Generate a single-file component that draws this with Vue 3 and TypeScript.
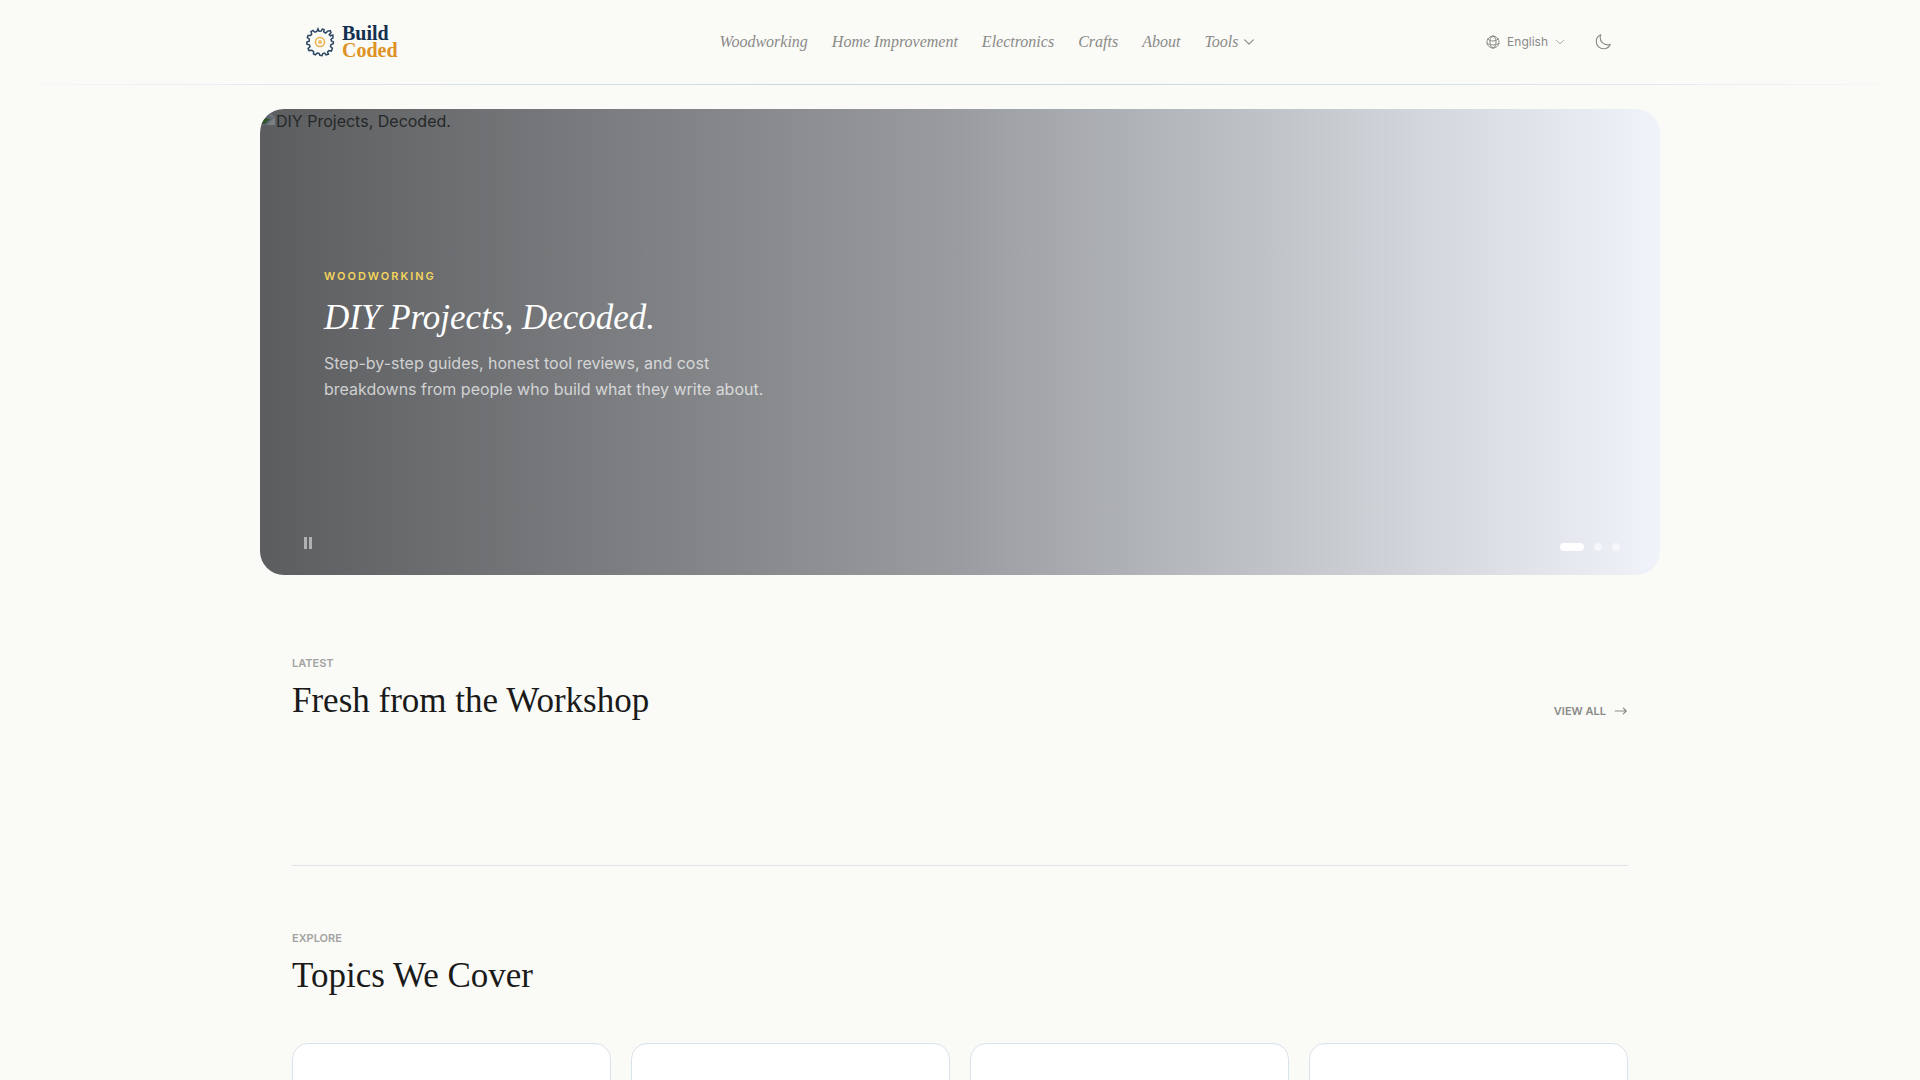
<script setup lang="ts">
interface NavItem {
  label: string
  href: string
}

const navItems: NavItem[] = [
  { label: 'Woodworking', href: '#woodworking' },
  { label: 'Home Improvement', href: '#home-improvement' },
  { label: 'Electronics', href: '#electronics' },
  { label: 'Crafts', href: '#crafts' },
  { label: 'About', href: '#about' },
]

const slides: number[] = [1, 2, 3]
const topicCards: number[] = [1, 2, 3, 4]
</script>

<template>
  <div class="page">
    <header class="site-header">
      <div class="header-inner">
        <a class="logo" href="#home" aria-label="Build Coded">
          <svg class="logo-gear" viewBox="-1 -1 32 32" fill="none" aria-hidden="true">
            <path
              d="M13 1.9 14 4.2 16.2 4.1 17.3 2.1 19 2.6 18.7 4.900 20.700 6 22.700 4.300 25.400 3.600 26 5.500 24.200 7.700 25.400 8.800 27.800 8 28 10.800 26 12.200 26.400 13.900 28.400 14.900 28.200 16.800 26 17.600 25.500 19.600 27.400 21.200 26.400 24.100 23.900 23.500 22.600 25 23.400 27.200 21 27.800 19.600 26 17.800 26.500 17 28.600 14.900 28.400 14.100 26.400 12.200 26 10.400 27.800 8.500 27 8.600 24.600 6.900 23.200 4 23.600 3.100 21.400 5 19.700 4.400 17.900 1.900 17.200 1.800 15 4.200 14.100 4.300 12.200 2.300 10.600 3 8.400 5.600 8.500 6.700 7 6 4.600 8 3.400 9.900 5.200 11.800 4.400Z"
              stroke="#2c4763"
              stroke-width="1.5"
              stroke-linejoin="miter"
            />
            <circle cx="15" cy="15" r="4.5" stroke="#efb04a" stroke-width="1.5" />
            <circle cx="15" cy="15" r="2" fill="#f3be68" />
          </svg>
          <span class="logo-text">
            <span>Build</span>
            <span class="logo-accent">Coded</span>
          </span>
        </a>

        <nav class="main-nav" aria-label="Main">
          <a v-for="item in navItems" :key="item.label" :href="item.href">{{ item.label }}</a>
          <button type="button" class="tools">
            Tools
            <svg width="14" height="14" viewBox="0 0 24 24" fill="none" stroke="currentColor" stroke-width="2" stroke-linecap="round" stroke-linejoin="round" aria-hidden="true">
              <path d="m19.5 8.250-7.500 7.500-7.500-7.500" />
            </svg>
          </button>
        </nav>

        <div class="actions">
          <button type="button" class="language">
            <svg width="16" height="16" viewBox="0 0 24 24" fill="none" stroke="currentColor" stroke-width="1.5" stroke-linecap="round" stroke-linejoin="round" aria-hidden="true">
              <path d="M12 21a9.004 9.004 0 0 0 8.716-6.747M12 21a9.004 9.004 0 0 1-8.716-6.747M12 21c2.485 0 4.500-4.030 4.500-9S14.485 3 12 3m0 18c-2.485 0-4.500-4.030-4.500-9S9.515 3 12 3m0 0a8.997 8.997 0 0 1 7.843 4.582M12 3a8.997 8.997 0 0 0-7.843 4.582m15.686 0A11.953 11.953 0 0 1 12 10.500c-2.998 0-5.740-1.100-7.843-2.918m15.686 0A8.959 8.959 0 0 1 21 12c0 .778-.099 1.533-.284 2.253m0 0A17.919 17.919 0 0 1 12 16.500c-3.162 0-6.133-.815-8.716-2.247m0 0A9.015 9.015 0 0 1 3 12c0-1.605.420-3.113 1.157-4.418" />
            </svg>
            <span>English</span>
            <svg width="12" height="12" viewBox="0 0 24 24" fill="none" stroke="currentColor" stroke-width="1.5" stroke-linecap="round" stroke-linejoin="round" aria-hidden="true">
              <path d="m19.5 8.250-7.500 7.500-7.500-7.500" />
            </svg>
          </button>
          <button type="button" class="theme" aria-label="Toggle dark mode">
            <svg width="18" height="18" viewBox="0 0 24 24" fill="none" stroke="currentColor" stroke-width="1.5" stroke-linecap="round" stroke-linejoin="round" aria-hidden="true">
              <path d="M21.752 15.002A9.720 9.720 0 0 1 18 15.750c-5.385 0-9.750-4.365-9.750-9.750 0-1.330.266-2.597.748-3.752A9.753 9.753 0 0 0 3 11.250C3 16.635 7.365 21 12.750 21a9.753 9.753 0 0 0 9.002-5.998Z" />
            </svg>
          </button>
        </div>
      </div>
    </header>

    <main>
      <section class="hero" aria-label="Featured">
        <div class="missing-image">
          <svg width="16" height="16" viewBox="0 0 16 16" aria-hidden="true">
            <path d="M1 4h9l5 4v8H1Z" fill="#5f6873" />
            <path d="M1 15v-2l4-4 5 1-5 5Z" fill="#34552a" />
            <path d="M15 8 7 16h8Z" fill="#7b8080" />
            <path d="M10 4v4h5Z" fill="#72777a" />
          </svg>
          <span>DIY Projects, Decoded.</span>
        </div>
        <div class="hero-copy">
          <p class="hero-topic">Woodworking</p>
          <h1>DIY Projects, Decoded.</h1>
          <p class="hero-text">
            Step-by-step guides, honest tool reviews, and cost breakdowns from people who build what they write about.
          </p>
        </div>
        <button type="button" class="pause" aria-label="Pause slideshow">
          <svg width="16" height="16" viewBox="0 0 16 16" fill="currentColor" aria-hidden="true">
            <rect x="4" y="2" width="3" height="12" />
            <rect x="9" y="2" width="3" height="12" />
          </svg>
        </button>
        <div class="dots">
          <button
            v-for="slide in slides"
            :key="slide"
            type="button"
            :class="['dot', { active: slide === 1 }]"
            :aria-label="`Go to slide ${slide}`"
          ></button>
        </div>
      </section>

      <section class="section latest">
        <div class="section-head">
          <div>
            <p class="eyebrow">Latest</p>
            <h2>Fresh from the Workshop</h2>
          </div>
          <a class="view-all" href="#articles">
            View all
            <svg width="14" height="14" viewBox="0 0 24 24" fill="none" stroke="currentColor" stroke-width="2" stroke-linecap="round" stroke-linejoin="round" aria-hidden="true">
              <path d="M2 12h19M16 7l5 5-5 5" />
            </svg>
          </a>
        </div>
      </section>

      <section class="section topics">
        <p class="eyebrow">Explore</p>
        <h2>Topics We Cover</h2>
        <div class="cards">
          <article v-for="card in topicCards" :key="card" class="card"></article>
        </div>
      </section>
    </main>
  </div>
</template>

<style>
html {
  background: #fafaf7;
}
body {
  margin: 0;
}
</style>

<style scoped>
.page {
  height: 100vh;
  overflow: hidden;
  background: #fafaf7;
  color: #1a1a1a;
  font-family: Inter, "Noto Sans", sans-serif;
  font-size: 16px;
  line-height: 24px;
}
h1,
h2,
p {
  margin: 0;
}
a {
  color: inherit;
  text-decoration: none;
}
button {
  padding: 0;
  border: 0;
  background: none;
  color: inherit;
  font: inherit;
  cursor: pointer;
}
svg {
  display: block;
  flex: none;
}
.site-header::after {
  content: "";
  display: block;
  height: 1px;
  background: linear-gradient(90deg, transparent, #dbe2ec 20%, #c5d5dd 50%, #dbe2ec 80%, transparent);
}
.header-inner {
  display: grid;
  grid-template-columns: 1fr auto 1fr;
  align-items: center;
  box-sizing: border-box;
  max-width: 1400px;
  height: 84px;
  margin: 0 auto;
  padding: 0 44px;
}
.logo {
  display: flex;
  align-items: center;
  gap: 6px;
  justify-self: start;
}
.logo-gear {
  width: 32px;
  height: 32px;
}
.logo-text {
  display: flex;
  flex-direction: column;
  color: #14304f;
  font: bold 20px/17px "Liberation Serif", serif;
}
.logo-accent {
  color: #df9224;
}
.main-nav {
  display: flex;
  align-items: center;
  gap: 24px;
  padding-left: 56px;
  color: #8a8a87;
  font: italic 16px/24px "Liberation Serif", serif;
}
.tools {
  display: flex;
  align-items: center;
  gap: 4px;
}
.actions {
  display: flex;
  align-items: center;
  justify-self: end;
  gap: 28px;
  padding-right: 4px;
  color: #8a8a87;
}
.language {
  display: flex;
  align-items: center;
  gap: 6px;
  font-size: 12px;
  line-height: 16px;
}
.hero {
  position: relative;
  display: flex;
  align-items: center;
  box-sizing: border-box;
  max-width: 1400px;
  aspect-ratio: 700 / 233;
  margin: 24px auto 0;
  padding: 0 64px;
  overflow: hidden;
  border-radius: 24px;
  background:
    linear-gradient(90deg, rgba(0, 0, 0, 0.62), rgba(0, 0, 0, 0.36) 50%, rgba(0, 0, 0, 0)),
    #f0f4fa;
}
.missing-image {
  position: absolute;
  top: 0;
  left: 0;
  display: flex;
  color: #262827;
}
.hero-copy {
  max-width: 448px;
  padding-bottom: 14px;
}
.hero-topic {
  margin-bottom: 12px;
  color: #f5d55c;
  font-size: 11px;
  font-weight: 600;
  line-height: 16px;
  letter-spacing: 2px;
  text-transform: uppercase;
}
h1 {
  margin-bottom: 10px;
  color: #fff;
  font: italic 35px/44px "Liberation Serif", serif;
  white-space: nowrap;
}
.hero-text {
  color: rgba(255, 255, 255, 0.7);
  line-height: 26px;
}
.pause {
  position: absolute;
  left: 40px;
  bottom: 24px;
  color: rgba(255, 255, 255, 0.5);
}
.dots {
  position: absolute;
  right: 40px;
  bottom: 24px;
  display: flex;
  gap: 10px;
}
.dot {
  width: 8px;
  height: 8px;
  border-radius: 4px;
  background: rgba(255, 255, 255, 0.5);
}
.dot.active {
  width: 24px;
  background: #fff;
}
.section {
  max-width: 1336px;
  margin: 0 auto;
}
.latest {
  padding: 80px 0 142px;
  border-bottom: 1px solid #dde4ec;
}
.section-head {
  display: flex;
  align-items: flex-end;
  justify-content: space-between;
}
.eyebrow {
  margin-bottom: 8px;
  color: #a3a3a1;
  font-size: 11px;
  font-weight: 600;
  line-height: 16px;
  text-transform: uppercase;
}
h2 {
  font: 35px/44px "Liberation Serif", serif;
}
.view-all {
  display: flex;
  align-items: center;
  gap: 8px;
  padding-bottom: 4px;
  color: #8a8a87;
  font-size: 11px;
  font-weight: 600;
  line-height: 16px;
  text-transform: uppercase;
}
.topics {
  padding-top: 64px;
}
.cards {
  display: grid;
  grid-template-columns: repeat(4, 1fr);
  gap: 20px;
  margin-top: 45px;
}
.card {
  min-height: 240px;
  border: 1px solid #d9e2ec;
  border-radius: 16px;
  background: #fff;
}
</style>
